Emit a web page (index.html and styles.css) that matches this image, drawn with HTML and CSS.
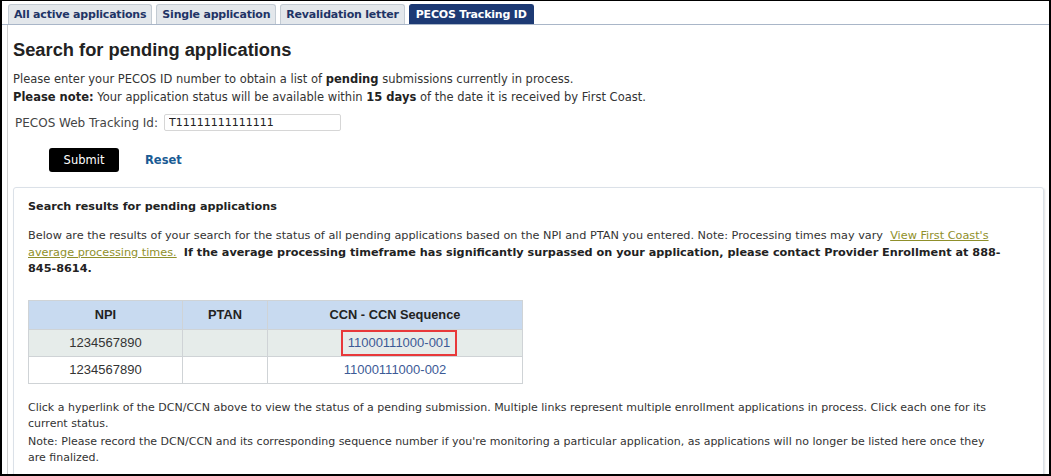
FILE: index.html
```html
<!DOCTYPE html>
<html>
<head>
<meta charset="utf-8">
<link rel="stylesheet" href="styles.css">
</head>
<body>
<div class="frame">
  <div class="tabs">
    <a class="tab">All active applications</a>
    <a class="tab">Single application</a>
    <a class="tab">Revalidation letter</a>
    <a class="tab active">PECOS Tracking ID</a>
  </div>
  <div class="content">
    <h1 class="title">Search for pending applications</h1>
    <p class="intro">Please enter your PECOS ID number to obtain a list of <b>pending</b> submissions currently in process.<br><b>Please note:</b> Your application status will be available within <b>15 days</b> of the date it is received by First Coast.</p>
    <div class="field">
      <label class="label">PECOS Web Tracking Id:</label>
      <input class="input" type="text" value="T11111111111111">
    </div>
    <div class="actions">
      <button class="submit">Submit</button>
      <a class="reset">Reset</a>
    </div>
    <div class="results">
      <h2 class="rtitle">Search results for pending applications</h2>
      <p class="rtext">Below are the results of your search for the status of all pending applications based on the NPI and PTAN you entered. Note: Processing times may vary&nbsp; <a class="olive">View First Coast's average processing times.</a>&nbsp; <b>If the average processing timeframe has significantly surpassed on your application, please contact Provider Enrollment at 888-845-8614.</b></p>
      <table class="grid">
        <thead>
          <tr><th class="c1">NPI</th><th class="c2">PTAN</th><th class="c3">CCN - CCN Sequence</th></tr>
        </thead>
        <tbody>
          <tr class="alt"><td>1234567890</td><td></td><td><span class="hl"><a class="ccn">11000111000-001</a></span></td></tr>
          <tr><td>1234567890</td><td></td><td><a class="ccn">11000111000-002</a></td></tr>
        </tbody>
      </table>
      <p class="foot">Click a hyperlink of the DCN/CCN above to view the status of a pending submission. Multiple links represent multiple enrollment applications in process. Click each one for its current status.</p>
      <p class="foot">Note: Please record the DCN/CCN and its corresponding sequence number if you're monitoring a particular application, as applications will no longer be listed here once they are finalized.</p>
    </div>
  </div>
</div>
</body>
</html>
```
FILE: styles.css
```css
html, body {
  margin: 0;
  padding: 0;
  background: #fff;
}
.frame {
  box-sizing: border-box;
  width: 1051px;
  height: 476px;
  border-style: solid;
  border-color: #000;
  border-width: 1px 2px 2px 2px;
  overflow: hidden;
  display: flex;
  flex-direction: column;
  font-family: "DejaVu Sans", Verdana, sans-serif;
  font-size: 11.5px;
  color: #333;
}
.tabs {
  display: flex;
  gap: 4px;
  padding: 3px 0 0 6px;
  border-bottom: 1px solid #a9b6c8;
  height: 20px;
}
.tab {
  display: flex;
  align-items: center;
  padding: 0 5px;
  height: 20px;
  box-sizing: border-box;
  background: #e3e7eb;
  border: 1px solid #c3cbd3;
  border-bottom: none;
  border-radius: 3px 3px 0 0;
  color: #1f3466;
  font-weight: bold;
  font-size: 11px;
  letter-spacing: -0.2px;
}
.tab.active {
  padding: 0 6px;
  background: #1d3a74;
  border-color: #1d3a74;
  color: #fff;
}
.content {
  flex: 1;
  margin-left: 5px;
  border-left: 1px solid #d0d0d0;
  padding: 0 5px 0 5px;
}
.title {
  margin: 14px 0 0 0;
  font-family: "Liberation Sans", Arial, sans-serif;
  font-size: 18.3px;
  line-height: 22px;
  font-weight: bold;
  color: #222;
}
.intro {
  margin: 9px 0 0 0;
  line-height: 18px;
}
.intro b { color: #222; }
.field {
  display: flex;
  align-items: center;
  margin-top: 8px;
  padding-left: 2px;
}
.label {
  color: #444;
  font-size: 12px;
}
.input {
  margin-left: 6px;
  width: 177px;
  height: 17px;
  box-sizing: border-box;
  border: 1px solid #d6d6d6;
  border-radius: 2px;
  padding: 0 4px;
  font-family: "DejaVu Sans", Verdana, sans-serif;
  font-size: 11px;
  color: #222;
}
.actions {
  display: flex;
  align-items: center;
  margin-top: 17px;
  padding-left: 36px;
  gap: 26px;
}
.submit {
  width: 70px;
  height: 24px;
  background: #000;
  color: #fff;
  border: none;
  border-radius: 3px;
  font-family: "DejaVu Sans", Verdana, sans-serif;
  font-size: 11.5px;
  padding: 0;
}
.reset {
  color: #1a5b94;
  font-weight: bold;
  font-size: 11.5px;
}
.results {
  margin-top: 15px;
  border: 1px solid #dbe1e8;
  border-radius: 3px;
  box-shadow: 1px 1px 2px rgba(0,0,0,0.12);
  padding: 11px 42px 10px 14px;
  height: 300px;
}
.rtitle {
  margin: 0;
  font-size: 11.2px;
  line-height: 16px;
  font-weight: bold;
  color: #222;
}
.rtext {
  margin: 13px 0 0 0;
  font-size: 11.25px;
  line-height: 16.5px;
}
.rtext b { color: #222; }
.olive {
  color: #8f8f2a;
  text-decoration: underline;
}
.grid {
  margin-top: 22px;
  border-collapse: collapse;
  font-family: "Liberation Sans", Arial, sans-serif;
  font-size: 13px;
  color: #333;
}
.grid th, .grid td {
  border: 1px solid #cfd3d6;
  text-align: center;
  padding: 0;
  height: 26px;
}
.grid th {
  background: #c8daf0;
  font-weight: bold;
  font-size: 12.8px;
  color: #222;
  height: 28px;
}
.c1 { width: 153px; }
.c2 { width: 84px; }
.c3 { width: 254px; }
.grid tr.alt td { background: #e6ecea; }
.ccn { color: #3c5a96; }
.hl {
  display: inline-block;
  vertical-align: middle;
  border: 2px solid #e8393a;
  padding: 3px 5px;
  line-height: 16px;
  margin-left: 8px;
}
.foot {
  margin: 16px 0 0 0;
  font-size: 11px;
  line-height: 16.5px;
}
.foot + .foot { margin-top: 1px; }
```
